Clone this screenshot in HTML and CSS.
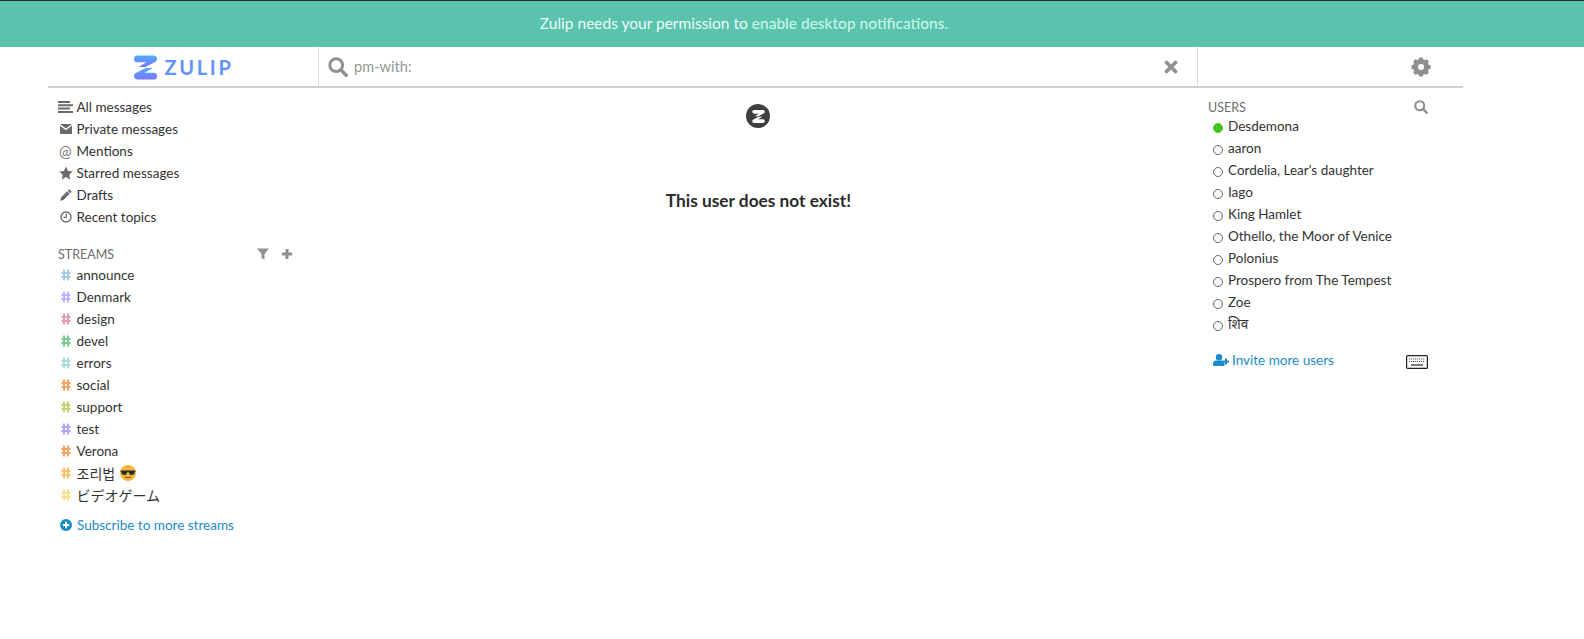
FILE: index.html
```html
<!DOCTYPE html>
<html lang="en">
<head>
    <meta charset="UTF-8">
    <title>Zulip</title>
    <link rel="stylesheet" href="styles.css">
</head>
<body>
    <svg class="defs" width="0" height="0">
        <defs>
            <linearGradient id="zgrad" x1="0" y1="0" x2="0" y2="1">
                <stop offset="0" stop-color="#50adff"></stop>
                <stop offset="1" stop-color="#7877fc"></stop>
            </linearGradient>
            <symbol id="hash" viewBox="0 0 10 12">
                <path d="M3 .5v11M7 .5v11M.5 4h9M.5 8h9" fill="none" stroke="currentColor" stroke-width="2"></path>
            </symbol>
            <symbol id="search" viewBox="0 0 20 20">
                <circle cx="8.2" cy="8.2" r="6.4" fill="none" stroke="currentColor" stroke-width="3"></circle>
                <path d="M12.8 12.8l5.4 5.4" stroke="currentColor" stroke-width="3.4" stroke-linecap="round"></path>
            </symbol>
            <symbol id="zmark" viewBox="0 0 24 25">
                <path d="M3.500 0H20.500A3.500 3.500 0 0 1 22.500 6.400L12 12H4.500L13 7H3.500A3.500 3.500 0 0 1 3.500 0z"></path>
                <path d="M20.500 25H3.500A3.500 3.500 0 0 1 1.500 18.600L12 13H19.500L11 18H20.500A3.500 3.500 0 0 1 20.500 25z"></path>
            </symbol>
        </defs>
    </svg>

    <div class="banner">Zulip needs your permission to <a href="#">enable desktop notifications.</a></div>

    <div class="app">
        <header class="topbar">
            <div class="brand">
                <svg class="brand-mark" fill="url(#zgrad)"><use href="#zmark"></use></svg>
                <span class="brand-name">ZULIP</span>
            </div>
            <div class="searchbar">
                <svg class="search-icon"><use href="#search"></use></svg>
                <span class="search-text">pm-with:</span>
                <svg class="clear-icon" viewBox="0 0 14 14">
                    <path d="M2.5 2.5l9 9M11.5 2.5l-9 9" stroke="currentColor" stroke-width="3.6" stroke-linecap="round"></path>
                </svg>
            </div>
            <div class="settings">
                <svg class="gear" viewBox="0 0 20 20">
                    <circle cx="10" cy="10" r="5.8" fill="none" stroke="currentColor" stroke-width="4.4"></circle>
                    <path d="M10 .5v19M.5 10h19M3.300 3.300l13.400 13.400M16.700 3.300L3.300 16.700" stroke="currentColor" stroke-width="3.800"></path>
                    <circle cx="10" cy="10" r="3" fill="#fff"></circle>
                </svg>
            </div>
        </header>

        <div class="columns">
            <aside class="left">
                <ul class="nav">
                    <li><svg class="ico lines" viewBox="0 0 15 12"><path d="M0 1h12M0 4.300h15M0 7.600h12M0 11h15" stroke="currentColor" stroke-width="2"></path></svg>All messages</li>
                    <li><svg class="ico" viewBox="0 0 12 10"><path d="M0 0h12L6 4.600zM0 1.700l6 4.600 6-4.700V10H0z" fill="currentColor"></path></svg>Private messages</li>
                    <li><span class="ico at">@</span>Mentions</li>
                    <li><svg class="ico star" viewBox="0 0 14 14"><path d="M7 .6l2 4.400 4.700.5-3.500 3.200 1 4.700L7 11l-4.200 2.400 1-4.700L.3 5.500 5 5z" fill="currentColor"></path></svg>Starred messages</li>
                    <li><svg class="ico" viewBox="0 0 13 13"><path d="M10 .3l2.700 2.700-1.500 1.500-2.700-2.700zM7.800 2.500l2.700 2.700-6.800 6.800-3.400.8.700-3.500z" fill="currentColor"></path></svg>Drafts</li>
                    <li><svg class="ico" viewBox="0 0 12 12"><circle cx="6" cy="6" r="5" fill="none" stroke="currentColor" stroke-width="1.400"></circle><path d="M6.300 2.800V6.300H3.500" fill="none" stroke="currentColor" stroke-width="1.200"></path></svg>Recent topics</li>
                </ul>

                <div class="streams-head">
                    <span class="head-label">STREAMS</span>
                    <svg class="filter" viewBox="0 0 12 12"><path d="M0 .5h12L7.500 6v5.500L4.500 10V6z" fill="currentColor"></path></svg>
                    <svg class="plus" viewBox="0 0 12 12"><path d="M6 1v10M1 6h10" stroke="currentColor" stroke-width="3"></path></svg>
                </div>
                <ul class="streams">
                    <li><svg class="hash" style="color:#a6c7e5"><use href="#hash"></use></svg>announce</li>
                    <li><svg class="hash" style="color:#c2b0ff"><use href="#hash"></use></svg>Denmark</li>
                    <li><svg class="hash" style="color:#e79ab5"><use href="#hash"></use></svg>design</li>
                    <li><svg class="hash" style="color:#76ce90"><use href="#hash"></use></svg>devel</li>
                    <li><svg class="hash" style="color:#a6dcdc"><use href="#hash"></use></svg>errors</li>
                    <li><svg class="hash" style="color:#f4a460"><use href="#hash"></use></svg>social</li>
                    <li><svg class="hash" style="color:#bfd56f"><use href="#hash"></use></svg>support</li>
                    <li><svg class="hash" style="color:#b0a5fd"><use href="#hash"></use></svg>test</li>
                    <li><svg class="hash" style="color:#f4a460"><use href="#hash"></use></svg>Verona</li>
                    <li><svg class="hash" style="color:#fbc26e"><use href="#hash"></use></svg><span class="cjk">조리법</span>
                        <svg class="emoji" viewBox="0 0 16 16">
                            <circle cx="8" cy="8" r="8" fill="#f5b83f"></circle>
                            <path d="M.6 5.500h14.800v1.200l-.6.3c-.3 2.300-1.500 3-3 3-1.700 0-2.800-1.100-3.200-2.900H7.400C7 8.900 5.900 10 4.200 10c-1.500 0-2.700-.7-3-3l-.6-.3z" fill="#2b2b2b"></path>
                            <path d="M5 11.800c1.800 1.200 4.200 1.200 6 0" fill="none" stroke="#7a4a12" stroke-width="1.100"></path>
                        </svg>
                    </li>
                    <li><svg class="hash" style="color:#fde08c"><use href="#hash"></use></svg><span class="cjk">ビデオゲーム</span></li>
                </ul>
                <a class="more" href="#">
                    <svg class="ico-plus" viewBox="0 0 12 12"><circle cx="6" cy="6" r="6" fill="currentColor"></circle><path d="M6 2.800v6.400M2.800 6h6.400" stroke="#fff" stroke-width="2"></path></svg>Subscribe to more streams
                </a>
            </aside>

            <main class="middle">
                <div class="spinner">
                    <svg class="spinner-mark" fill="#fff"><use href="#zmark"></use></svg>
                </div>
                <h4 class="empty">This user does not exist!</h4>
            </main>

            <aside class="right">
                <div class="users-head">
                    <span class="head-label">USERS</span>
                    <svg class="user-search"><use href="#search"></use></svg>
                </div>
                <ul class="users">
                    <li><span class="dot active"></span>Desdemona</li>
                    <li><span class="dot"></span>aaron</li>
                    <li><span class="dot"></span>Cordelia, Lear's daughter</li>
                    <li><span class="dot"></span>Iago</li>
                    <li><span class="dot"></span>King Hamlet</li>
                    <li><span class="dot"></span>Othello, the Moor of Venice</li>
                    <li><span class="dot"></span>Polonius</li>
                    <li><span class="dot"></span>Prospero from The Tempest</li>
                    <li><span class="dot"></span>Zoe</li>
                    <li><span class="dot"></span>शिव</li>
                </ul>
                <div class="invite">
                    <a class="more" href="#">
                        <svg class="ico-invite" viewBox="0 0 16 12"><circle cx="6" cy="3.200" r="3.200" fill="currentColor"></circle><path d="M0 12V9.500C0 7.500 1.500 6.500 3 6.500h6c1.500 0 2.500 1 2.500 3V12z" fill="currentColor"></path><path d="M13 4.500v6M10 7.500h6" stroke="currentColor" stroke-width="2"></path></svg>Invite more users
                    </a>
                    <svg class="keys" viewBox="0 0 22 14">
                        <rect x=".6" y=".6" width="20.800" height="12.800" rx="1" fill="#fff" stroke="#222" stroke-width="1.200"></rect>
                        <path d="M3 4h16M3 6.500h16" stroke="#555" stroke-width="1.200" stroke-dasharray="1.200 .8"></path>
                        <path d="M5 10h12" stroke="#444" stroke-width="1.400"></path>
                    </svg>
                </div>
            </aside>
        </div>
    </div>
</body>
</html>
```

FILE: styles.css
```css
*{
    margin: 0;
    padding: 0;
    box-sizing: border-box;
}

body{
    font-family: "Lato", "Noto Sans", sans-serif;
    font-size: 13.5px;
    color: #333;
    background-color: #fff;
}

a{
    text-decoration: none;
    color: inherit;
}

ul{
    list-style: none;
}

.defs{
    position: absolute;
}

.banner{
    height: 47px;
    line-height: 45px;
    padding-right: 96px;
    text-align: center;
    font-size: 15.5px;
    color: #eef9f6;
    background-color: #5ac3ae;
    border-top: 1px solid #2a2a2a;
}

.banner a{
    color: #c8f5e8;
    font-weight: 500;
}

.app{
    width: 1415px;
    margin-left: 48px;
}

.topbar{
    display: flex;
    height: 41px;
    border-bottom: 2px solid #d0d0d0;
}

.brand{
    display: flex;
    align-items: center;
    justify-content: center;
    gap: 7px;
    width: 271px;
    padding: 1px 0 0 2px;
    border-right: 1px solid #ddd;
}

.brand-mark{
    width: 23px;
    height: 25px;
}

.brand-name{
    font-size: 20px;
    font-weight: 700;
    letter-spacing: 2.7px;
    color: #6492fb;
}

.searchbar{
    display: flex;
    align-items: center;
    width: 879px;
    padding: 0 19px 0 9px;
    border-right: 1px solid #ddd;
}

.search-icon{
    width: 20px;
    height: 20px;
    color: #8f8f8f;
}

.search-text{
    flex: 1;
    margin-left: 6px;
    font-size: 14.6px;
    color: #969696;
}

.clear-icon{
    width: 14px;
    height: 14px;
    color: #8f8f8f;
}

.settings{
    flex: 1;
    display: flex;
    align-items: center;
    justify-content: flex-end;
    padding-right: 32px;
}

.gear{
    width: 20px;
    height: 20px;
    color: #8f8f8f;
}

.columns{
    display: flex;
}

.left{
    width: 271px;
    padding-top: 8px;
}

.nav li,
.streams li{
    display: flex;
    align-items: center;
    height: 22px;
    padding-left: 28.500px;
    position: relative;
}

.ico{
    position: absolute;
    left: 12px;
    width: 12px;
    height: 12px;
    color: #6b6b6b;
}

.lines{
    left: 10px;
    width: 15px;
}

.star{
    left: 11px;
    width: 14px;
    height: 14px;
}

.at{
    left: 11px;
    font-size: 15px;
    line-height: 12px;
    color: #777;
}

.streams-head{
    display: flex;
    align-items: center;
    height: 22px;
    margin-top: 15px;
    padding-left: 10px;
}

.head-label{
    font-size: 12.500px;
    color: #6e6e6e;
}

.filter{
    width: 12px;
    height: 12px;
    margin-left: 143px;
    color: #8f8f8f;
}

.plus{
    width: 12px;
    height: 12px;
    margin-left: 12px;
    color: #8f8f8f;
}

.streams{
    margin-top: -1px;
}

.hash{
    position: absolute;
    left: 12.500px;
    width: 10px;
    height: 12px;
}

.cjk{
    font-family: "Noto Sans CJK KR", "Noto Sans CJK JP", sans-serif;
    font-size: 14px;
}

.emoji{
    width: 16px;
    height: 16px;
    margin-left: 5px;
}

.more{
    display: flex;
    align-items: center;
    color: #1a8cc8;
}

.left .more{
    height: 22px;
    margin-top: 8px;
    padding-left: 12px;
}

.ico-plus{
    width: 12px;
    height: 12px;
    margin-right: 5px;
}

.middle{
    width: 879px;
    padding-top: 16px;
    text-align: center;
}

.spinner{
    display: flex;
    align-items: center;
    justify-content: center;
    width: 24px;
    height: 24px;
    margin-left: 427px;
    border-radius: 50%;
    background-color: #3f3f3f;
}

.spinner-mark{
    width: 13px;
    height: 13px;
}

.empty{
    margin-top: 61px;
    font-size: 17.3px;
    line-height: 24px;
    font-weight: 700;
    color: #2b2b2b;
}

.right{
    flex: 1;
    padding-top: 8px;
}

.users-head{
    display: flex;
    align-items: center;
    justify-content: space-between;
    width: 230px;
    height: 22px;
    padding-left: 10px;
}

.user-search{
    width: 14px;
    height: 14px;
    color: #8f8f8f;
}

.users{
    margin-top: -3px;
}

.users li{
    display: flex;
    align-items: center;
    height: 22px;
    padding-left: 15px;
}

.dot{
    flex: none;
    width: 10px;
    height: 10px;
    margin: 4px 5px 0 0;
    border: 1px solid #666;
    border-radius: 50%;
}

.dot.active{
    background-color: #44c21d;
    border-color: #44c21d;
}

.invite{
    display: flex;
    align-items: center;
    justify-content: space-between;
    width: 230px;
    height: 22px;
    margin-top: 14px;
    padding-left: 15px;
}

.ico-invite{
    width: 16px;
    height: 12px;
    margin-right: 3px;
}

.keys{
    width: 22px;
    height: 14px;
    margin-top: 4px;
}
```
